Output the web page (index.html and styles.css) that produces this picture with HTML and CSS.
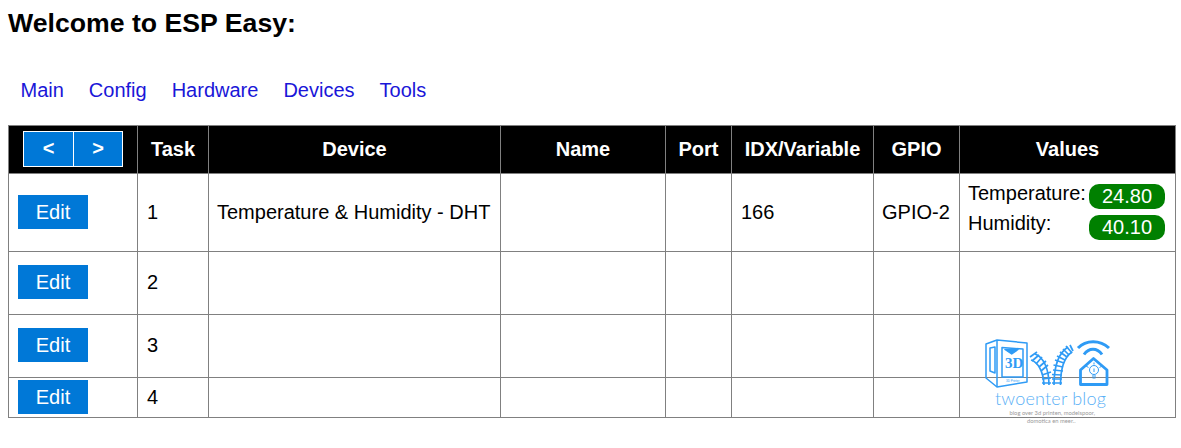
FILE: index.html
```html
<!DOCTYPE html>
<html lang="en">
<head>
<meta charset="utf-8">
<title>Welcome to ESP Easy</title>
<link rel="stylesheet" href="styles.css">
</head>
<body>
<h1 class="title">Welcome to ESP Easy:</h1>
<nav class="menu">
  <a href="#">Main</a>
  <a href="#">Config</a>
  <a href="#">Hardware</a>
  <a href="#">Devices</a>
  <a href="#">Tools</a>
</nav>
<table class="devices">
  <colgroup>
    <col class="c1"><col class="c2"><col class="c3"><col class="c4"><col class="c5"><col class="c6"><col class="c7"><col class="c8">
  </colgroup>
  <thead>
    <tr>
      <th class="pager-cell"><span class="pager"><a href="#">&lt;</a><a href="#">&gt;</a></span></th>
      <th>Task</th><th>Device</th><th>Name</th><th>Port</th><th>IDX/Variable</th><th>GPIO</th><th>Values</th>
    </tr>
  </thead>
  <tbody>
    <tr class="r1">
      <td class="act"><a class="edit" href="#">Edit</a></td>
      <td>1</td><td class="tight">Temperature &amp; Humidity - DHT</td><td></td><td></td><td>166</td><td class="tight">GPIO-2</td>
      <td class="vals">
        <div class="val v-temp"><span>Temperature:</span><b>24.80</b></div>
        <div class="val v-hum"><span>Humidity:</span><b>40.10</b></div>
      </td>
    </tr>
    <tr class="r2"><td class="act"><a class="edit" href="#">Edit</a></td><td class="num">2</td><td></td><td></td><td></td><td></td><td></td><td></td></tr>
    <tr class="r2"><td class="act"><a class="edit" href="#">Edit</a></td><td class="num">3</td><td></td><td></td><td></td><td></td><td></td><td></td></tr>
    <tr class="r4"><td class="act"><a class="edit" href="#">Edit</a></td><td>4</td><td></td><td></td><td></td><td></td><td></td><td></td></tr>
  </tbody>
</table>
<svg class="logo" viewBox="0 0 150 100" width="150" height="100" aria-label="twoenter blog">
  <g fill="none" stroke="#2f9bf5" stroke-width="1.500" stroke-linejoin="round">
    <!-- printer -->
    <path d="M16 14 L27 10 L57 13 L57 52 L27 57 L16 48 Z"/>
    <path d="M27 10 L27 57"/>
    <path d="M20 18 L25 17 L25 43 L20 41 Z"/>
    <path d="M32 17.500 L53 19 L53 47 L32 47 Z"/>
    <path d="M35 19.500 L48 19.500 L41.700 24 Z" fill="#2f9bf5"/>
    <!-- left rail -->
    <g stroke-width="1.700">
      <path d="M61 30 C68 32 73.500 42 74 55"/>
      <path d="M65 24 C74 27 79 40 79 55"/>
      <path d="M60 27 L67 22 M62 31 L69 25 M66 34 L72 27 M69 37 L76 31 M71 41 L78 35 M72 45 L81 42 M72 49 L81 48 M72 53 L81 53"/>
    </g>
    <!-- right rail -->
    <g stroke-width="1.700">
      <path d="M84 55 C84 38 87 24 98 17"/>
      <path d="M90.500 55 C90.500 40 93 28 102 22"/>
      <path d="M82 53 L92 53 M82 49 L92 49 M82 44.500 L92 45 M83 40 L93 41 M83.500 35 L93 37 M85 30 L94 33 M87 26 L95 30 M90 22 L97 27 M93 19 L99 25 M96 16 L102 23 M100 15 L103 21"/>
    </g>
    <!-- wifi + house -->
    <path d="M108 18 C116 9.500 130 9.500 139 18" stroke-width="3"/>
    <path d="M114 24.500 C119 17.500 127 17.500 132 24.500" stroke-width="3"/>
    <path d="M110.500 40 L123.500 28.500 L137 40 L137 54.500 L110.500 54.500 Z" stroke-width="2.800"/>
    <circle cx="124" cy="40" r="4.500" stroke-width="1"/>
    <path d="M124 38.500 L124 42 M122 46 L126 46 M122.500 48 L125.500 48" stroke-width="1"/>
    <path d="M116 36 L118.500 37.500 M132 36 L129.500 37.500 M124 32.500 L124 34.500" stroke-width="1"/>
  </g>
  <text class="logo-3d" x="35" y="38">3D</text>
  <text class="logo-tiny" x="36" y="52">3D Printer</text>
  <text class="logo-name" x="25" y="75">twoenter blog</text>
  <text class="logo-sub" x="39.500" y="85">blog over 3d printen, modelspoor,</text>
  <text class="logo-sub" x="57" y="92.500">domotica en meer..</text>
</svg>
</body>
</html>
```

FILE: styles.css
```css
html, body {
  margin: 0;
  padding: 0;
}
body {
  position: relative;
  padding: 8px;
  font-family: "Liberation Sans", Arial, sans-serif;
  font-size: 20px;
  color: #000;
  background: #fff;
}
.title {
  margin: 0;
  font-size: 26.670px;
  line-height: 30px;
  font-weight: bold;
}
.menu {
  display: flex;
  gap: 25px;
  padding: 41px 0 0 12.500px;
  height: 46px;
  line-height: 23px;
}
.menu a {
  color: #1a16d8;
  text-decoration: none;
}
.devices {
  border-collapse: collapse;
  table-layout: fixed;
  width: 1167px;
}
.c1 { width: 129px; }
.c2 { width: 71px; }
.c3 { width: 292px; }
.c4 { width: 165px; }
.c5 { width: 66px; }
.c6 { width: 142px; }
.c7 { width: 86px; }
.c8 { width: 216px; }
.devices th, .devices td {
  border: 1px solid #808080;
  padding: 0 9px;
  text-align: left;
  white-space: nowrap;
}
.devices th {
  height: 47px;
  background: #000;
  color: #fff;
  font-weight: bold;
  text-align: center;
}
.devices th.pager-cell {
  padding: 0 0 0 14px;
  text-align: left;
}
.r1 td { height: 77px; }
.r2 td { height: 62px; }
.r4 td { height: 39px; }
.devices .r2 td.num { height: 60px; padding-bottom: 2px; }
.devices td.tight { padding-left: 8px; }
.pager {
  display: inline-flex;
  vertical-align: middle;
  border: 1px solid #fff;
  margin-top: -2px;
}
.pager a {
  width: 49px;
  height: 34px;
  line-height: 33px;
  background: #0078d7;
  color: #fff;
  text-decoration: none;
  text-align: center;
  font-weight: bold;
}
.pager a + a {
  width: 48px;
  border-left: 1px solid #fff;
}
.edit {
  display: block;
  width: 70px;
  height: 34px;
  margin-top: -2px;
  line-height: 34px;
  background: #0078d7;
  color: #fff;
  text-decoration: none;
  text-align: center;
}
.devices td.vals {
  padding: 0 10px 0 9px;
}
.val {
  display: flex;
  justify-content: space-between;
}
.v-temp { margin-top: -2px; }
.val b {
  width: 76px;
  height: 25px;
  line-height: 25px;
  border-radius: 10px;
  background: #008000;
  color: #fff;
  font-weight: normal;
  text-align: center;
}
.val span { margin-left: -1px; }
.v-temp span { line-height: 20px; margin-top: -1px; }
.v-hum { margin-top: 6px; }
.v-hum span { line-height: 20px; margin-top: -2px; }
.logo {
  position: absolute;
  left: 970px;
  top: 330px;
  overflow: visible;
}
.logo-name {
  font-family: Lato, "Liberation Sans", sans-serif;
  font-weight: 300;
  font-size: 18px;
  letter-spacing: 0.200px;
  fill: #5ab0f6;
}
.logo-sub {
  font-family: Lato, "Liberation Sans", sans-serif;
  font-size: 5.800px;
  fill: #9a9a9a;
}
.logo-3d {
  font-family: "Liberation Serif", serif;
  font-weight: bold;
  font-size: 15px;
  fill: #2f9bf5;
}
.logo-tiny {
  font-family: "Liberation Sans", sans-serif;
  font-size: 3px;
  fill: #2f9bf5;
}
```
